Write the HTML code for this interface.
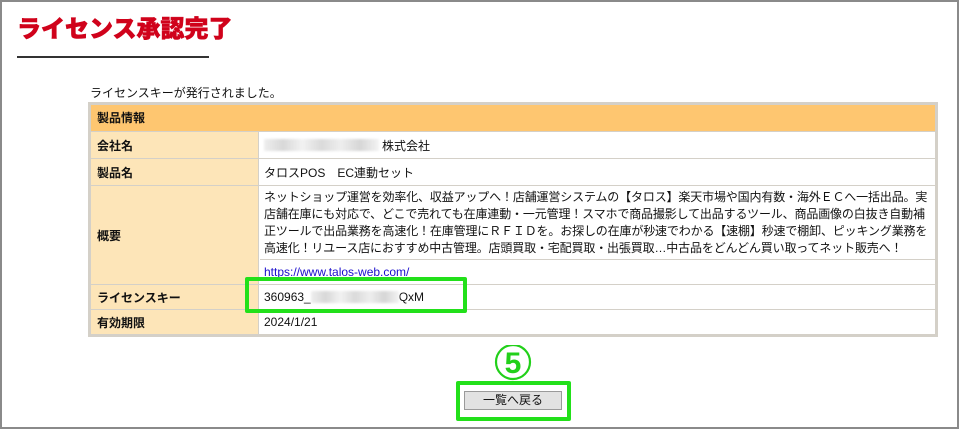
<!DOCTYPE html>
<html><head><meta charset="utf-8"><style>
*{margin:0;padding:0;box-sizing:border-box}
body{width:960px;height:430px;background:#fff;position:relative;overflow:hidden;font-family:"Liberation Sans","Noto Sans CJK JP",sans-serif;font-size:12px;color:#111}
.frame{position:absolute;left:0;top:0;width:959px;height:429px;border:2px solid #8a8a8a}
h1{position:absolute;left:17px;top:9px;font-size:24px;color:#d0021b;font-weight:900;white-space:nowrap;-webkit-text-stroke:0.6px #d0021b}
.hr{position:absolute;left:17px;top:56px;width:192px;height:2px;background:#333}
.msg{position:absolute;left:90px;top:84px}
.tbl{position:absolute;left:88px;top:102px;width:850px;height:235px;border:3px solid #d4d0c8;background:#fff}
.row{position:absolute;left:0;width:844px;border-bottom:1px solid #d4d0c8}
.lab{position:absolute;left:0;top:0;bottom:0;width:168px;background:#fde5b8;font-weight:bold;padding-left:6px;display:flex;align-items:center;border-right:1px solid #d4d0c8}
.val{position:absolute;left:169px;top:0;bottom:0;right:0;padding-left:4px;display:flex;align-items:center;white-space:nowrap}
.blur{display:inline-block;height:12px;background:linear-gradient(90deg,#eee,#d8d8d8,#f2f2f2,#dadada,#eeeeee,#d6d6d6,#f3f3f3);filter:blur(1px)}
.g{position:absolute;border:4px solid #22e01a;border-radius:2px}
.btn{position:absolute;left:464px;top:391px;width:98px;height:19px;background:#e2e2e2;border:1px solid #9a9a9a;text-align:center;line-height:17px;font-size:12px}
</style></head><body>
<div class="frame"></div>
<h1>ライセンス承認完了</h1>
<div class="hr"></div>
<div class="msg">ライセンスキーが発行されました。</div>
<div class="tbl">
 <div class="row" style="top:0;height:27px;background:#fec670;font-weight:bold;padding-left:6px;line-height:26px">製品情報</div>
 <div class="row" style="top:27px;height:27px"><div class="lab">会社名</div><div class="val"><span class="blur" style="width:115px;margin-right:3px"></span>株式会社</div></div>
 <div class="row" style="top:54px;height:27px"><div class="lab">製品名</div><div class="val">タロスPOS　EC連動セット</div></div>
 <div class="row" style="top:81px;height:99px"><div class="lab">概要</div>
  <div class="val" style="display:block;bottom:auto;height:74px;line-height:17px;padding-top:3px;letter-spacing:-0.15px;border-bottom:1px solid #d4d0c8">ネットショップ運営を効率化、収益アップへ！店舗運営システムの【タロス】楽天市場や国内有数・海外ＥＣへ一括出品。実<br>店舗在庫にも対応で、どこで売れても在庫連動・一元管理！スマホで商品撮影して出品するツール、商品画像の白抜き自動補<br>正ツールで出品業務を高速化！在庫管理にＲＦＩＤを。お探しの在庫が秒速でわかる【速棚】秒速で棚卸、ピッキング業務を<br>高速化！リユース店におすすめ中古管理。店頭買取・宅配買取・出張買取…中古品をどんどん買い取ってネット販売へ！</div>
  <div class="val" style="top:74px;color:#1a0dcc">https://www.talos-web.com/</div></div>
 <div class="row" style="top:180px;height:25px"><div class="lab">ライセンスキー</div><div class="val">360963_<span class="blur" style="width:88px"></span>QxM</div></div>
 <div class="row" style="top:205px;height:24px;border-bottom:none"><div class="lab">有効期限</div><div class="val" style="align-items:flex-start;padding-top:5px">2024/1/21</div></div>
</div>
<div class="g" style="left:245px;top:277px;width:222px;height:36px"></div>
<svg style="position:absolute;left:492px;top:345px" width="42" height="36"><circle cx="21" cy="17" r="17" fill="none" stroke="#22d01a" stroke-width="2.2"/><text x="21" y="28" text-anchor="middle" font-family="Liberation Sans,sans-serif" font-weight="bold" font-size="30" fill="#22d01a">5</text></svg>
<div class="btn">一覧へ戻る</div>
<div class="g" style="left:456px;top:381px;width:115px;height:40px"></div>
</body></html>
